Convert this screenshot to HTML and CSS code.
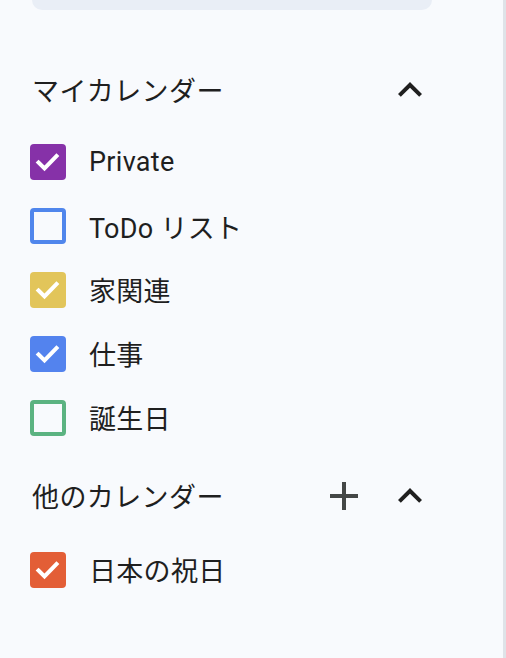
FILE: index.html
```html
<!DOCTYPE html>
<html lang="ja">
<head>
<meta charset="utf-8">
<link rel="stylesheet" href="styles.css">
</head>
<body>
<div class="sidebar">
  <div class="search"></div>

  <section class="group group-mine">
    <div class="group-head">
      <span class="group-title ja">マイカレンダー</span>
      <div class="head-icons">
        <span class="icon icon-dark">
          <svg viewBox="0 0 24 24" width="48" height="48"><path d="M12 8l-6 6 1.41 1.41L12 10.83l4.59 4.58L18 14z"/></svg>
        </span>
      </div>
    </div>
    <ul class="cal-list">
      <li class="cal"><span class="box checked c-purple"><svg viewBox="0 0 36 36" width="36" height="36"><path d="M8.5 18.5l6 6 12-12.5"/></svg></span><span class="name">Private</span></li>
      <li class="cal"><span class="box c-blue-o"></span><span class="name">ToDo リスト</span></li>
      <li class="cal"><span class="box checked c-yellow"><svg viewBox="0 0 36 36" width="36" height="36"><path d="M8.5 18.5l6 6 12-12.5"/></svg></span><span class="name ja">家関連</span></li>
      <li class="cal"><span class="box checked c-blue"><svg viewBox="0 0 36 36" width="36" height="36"><path d="M8.5 18.5l6 6 12-12.5"/></svg></span><span class="name ja">仕事</span></li>
      <li class="cal"><span class="box c-green-o"></span><span class="name ja">誕生日</span></li>
    </ul>
  </section>

  <section class="group group-other">
    <div class="group-head">
      <span class="group-title ja">他のカレンダー</span>
      <div class="head-icons">
        <span class="icon icon-gray">
          <svg viewBox="0 0 24 24" width="48" height="48"><path d="M19 13h-6v6h-2v-6H5v-2h6V5h2v6h6v2z"/></svg>
        </span>
        <span class="icon icon-dark">
          <svg viewBox="0 0 24 24" width="48" height="48"><path d="M12 8l-6 6 1.41 1.41L12 10.83l4.59 4.58L18 14z"/></svg>
        </span>
      </div>
    </div>
    <ul class="cal-list">
      <li class="cal"><span class="box checked c-orange"><svg viewBox="0 0 36 36" width="36" height="36"><path d="M8.5 18.5l6 6 12-12.5"/></svg></span><span class="name ja">日本の祝日</span></li>
    </ul>
  </section>
</div>
</body>
</html>
```
FILE: styles.css
```css
* { box-sizing: border-box; }
html, body { margin: 0; padding: 0; }
body {
  background: #f8fafd;
  font-family: Roboto, "Noto Sans CJK JP", sans-serif;
  color: #1f1f1f;
  width: 506px;
  height: 658px;
  overflow: hidden;
}
.sidebar {
  width: 506px;
  height: 658px;
  border-right: 3px solid #dfe3e8;
  background: #f8fafd;
}
.search {
  margin-left: 32px;
  width: 400px;
  height: 10px;
  background: #e9eef6;
  border-radius: 0 0 12px 12px;
}
.group { margin-left: 32px; width: 402px; }
.group-mine { margin-top: 48px; }
.group-other { margin-top: 14px; }
.group-head {
  display: flex;
  align-items: center;
  justify-content: space-between;
  height: 64px;
}
.group-title {
  font-size: 27px;
  color: #1f1f1f;
  letter-spacing: 0.4px;
}
.ja { font-family: "Noto Sans CJK JP", sans-serif; line-height: 1.2; }
.head-icons { display: flex; gap: 18px; }
.icon { display: flex; width: 48px; height: 48px; }
.icon-dark svg { fill: #1f1f1f; }
.icon-gray svg { fill: #444746; }
.cal-list { list-style: none; margin: 8px 0 0; padding: 0; }
.group-other .cal-list { margin-top: 10px; }
.cal {
  display: flex;
  align-items: center;
  height: 64px;
  margin-left: -2px;
}
.box {
  width: 36px;
  height: 36px;
  border-radius: 4px;
  flex: none;
  display: flex;
}
.box svg { fill: none; stroke: #fff; stroke-width: 4; stroke-linecap: square; }
.c-purple { background: #8631a8; }
.c-yellow { background: #e2c55a; }
.c-blue { background: #5383ee; }
.c-orange { background: #e35e36; }
.c-blue-o { border: 4px solid #5086ec; }
.c-green-o { border: 4px solid #5bb381; }
.name {
  margin-left: 23px;
  font-size: 27px;
  color: #1f1f1f;
  letter-spacing: 0.3px;
}
```
